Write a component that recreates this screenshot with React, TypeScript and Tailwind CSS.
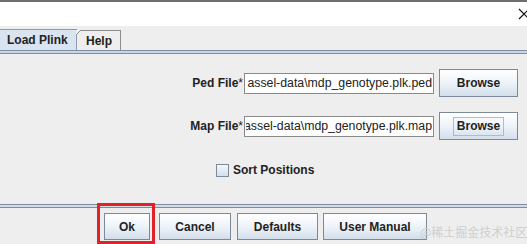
import React from "react";

const btn =
  "flex items-center justify-center border border-[#7a8a99] bg-gradient-to-b from-[#ffffff] via-[#eef3f9] to-[#d3dfeb] text-[12px] font-bold text-[#222222]";

function TextField({ text }: { text: string }) {
  return (
    <div className="ml-[1px] w-[190px] h-[21px] border border-[#8a8a8a] bg-white pl-[1px] pr-[1px] flex items-center">
      <div className="w-full overflow-hidden flex justify-end">
        <span className="whitespace-nowrap text-[12.3px] text-[#222222] leading-[15px]">{text}</span>
      </div>
    </div>
  );
}

export default function App() {
  return (
    <div
      className="relative w-[527px] h-[244px] overflow-hidden bg-[#eeeeee] flex flex-col"
      style={{ fontFamily: '"Liberation Sans", Arial, sans-serif' }}
    >
      <div className="h-[2px] bg-[#6e6e6e]" />
      <div className="h-[24px] bg-white flex items-center justify-end">
        <svg width="12" height="12" viewBox="0 0 12 12" className="mr-[-3px]">
          <path d="M1 1 L11 11 M11 1 L1 11" stroke="#111" strokeWidth="1.2" fill="none" />
        </svg>
      </div>
      {/* tabs */}
      <div className="h-[24px] flex items-end">
        <div className="w-[77px] h-[21px] bg-[#d9e4f0] border-t border-r border-[#8c9cb0] flex items-center pl-[7px] text-[12px] font-bold text-[#222222]">
          Load Plink
        </div>
        <div className="relative w-[44px] h-[20px] border-t border-r border-[#8c8c8c] bg-[#eeeeee] flex items-center pl-[9px] text-[12px] font-bold text-[#222222]">
          Help
          <svg width="5" height="5" viewBox="0 0 5 5" className="absolute left-[-1px] top-[-1px]">
            <path d="M0 5 L0 0 L5 0 Z" fill="#eeeeee" />
            <path d="M0 5 L5 0" stroke="#8c8c8c" strokeWidth="1" />
          </svg>
        </div>
      </div>
      <div className="h-[4px] border-t border-b border-[#7d8ea4] bg-[#c9d6e4]" />
      {/* content */}
      <div className="h-[150px] flex flex-col pt-[15px]">
        <div className="h-[28px] flex items-center">
          <div className="w-[243px] text-right text-[12px] text-[#222222] whitespace-nowrap">
            <span className="font-bold">Ped File</span>
            <span>*</span>
          </div>
          <TextField text="assel-data\mdp_genotype.plk.ped" />
          <div className={`${btn} ml-[5px] w-[79px] h-[28px]`}>Browse</div>
        </div>
        <div className="mt-[15px] h-[28px] flex items-center">
          <div className="w-[243px] text-right text-[12px] text-[#222222] whitespace-nowrap">
            <span className="font-bold">Map File</span>
            <span>*</span>
          </div>
          <TextField text="assel-data\mdp_genotype.plk.map" />
          <div className={`${btn} ml-[5px] w-[79px] h-[28px]`}>
            <div className="h-[19px] px-[3px] flex items-center border border-[#a9bcd1]">Browse</div>
          </div>
        </div>
        <div className="mt-[21px] flex items-center pl-[216px]">
          <div className="w-[13px] h-[13px] border border-[#7a8a99] bg-gradient-to-b from-[#f4f7fb] to-[#d3dfeb]" />
          <span className="ml-[4px] text-[12px] font-bold text-[#222222]">Sort Positions</span>
        </div>
      </div>
      <div className="h-[4px] border-t border-b border-[#7d8ea4] bg-[#d2dce7]" />
      {/* buttons */}
      <div className="flex pt-[5px] pl-[104px]">
        <div className={`${btn} w-[46px] h-[27px]`}>Ok</div>
        <div className={`${btn} ml-[9px] w-[72px] h-[27px]`}>Cancel</div>
        <div className={`${btn} ml-[6px] w-[81px] h-[27px]`}>Defaults</div>
        <div className={`${btn} ml-[5px] w-[104px] h-[27px]`}>User Manual</div>
      </div>
      <div className="absolute left-[97px] top-[203px] w-[58px] h-[41px] border-[3px] border-[#e0222b]" />
      <div
        className="absolute left-[420px] top-[223px] text-[12px] text-[#cfcfcf] whitespace-nowrap"
        style={{ fontFamily: '"Noto Sans CJK SC", sans-serif' }}
      >
        @稀土掘金技术社区
      </div>
    </div>
  );
}
